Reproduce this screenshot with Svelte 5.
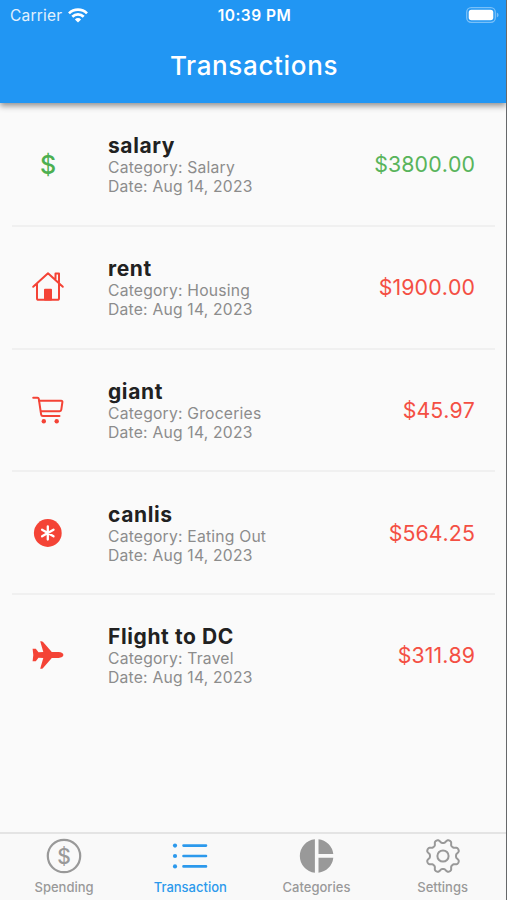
<script>
  const date = 'Aug 14, 2023';

  const transactions = [
    { id: 1, name: 'salary', category: 'Salary', amount: 3800, icon: 'dollar', income: true },
    { id: 2, name: 'rent', category: 'Housing', amount: 1900, icon: 'home' },
    { id: 3, name: 'giant', category: 'Groceries', amount: 45.97, icon: 'cart' },
    { id: 4, name: 'canlis', category: 'Eating Out', amount: 564.25, icon: 'asterisk' },
    { id: 5, name: 'Flight to DC', category: 'Travel', amount: 311.89, icon: 'plane' },
  ];

  const tabs = ['Spending', 'Transaction', 'Categories', 'Settings'];
  let active = $state('Transaction');

  // outline of the eight-toothed settings gear
  const gear = Array.from({ length: 160 }, (_, i) => {
    const a = (i / 160) * Math.PI * 2;
    const r = 14.9 - 2 * Math.tanh(1.6 * Math.cos(8 * a) + 0.1);
    return `${(18 + r * Math.sin(a)).toFixed(2)},${(18 - r * Math.cos(a)).toFixed(2)}`;
  }).join(' ');
</script>

<div class="phone">
  <header>
    <div class="status">
      <div class="carrier">
        <span>Carrier</span>
        <svg width="20" height="15" viewBox="0 0 20 15" fill="none" stroke="#fff" stroke-width="2.7">
          <path d="M1 5.4a12.8 12.8 0 0 1 18 0" />
          <path d="M4.3 8.8a8.1 8.1 0 0 1 11.4 0" />
          <path d="M10 14.6l-3.1-3.2a4.4 4.4 0 0 1 6.2 0z" fill="#fff" stroke="none" />
        </svg>
      </div>
      <div class="time">10:39 PM</div>
      <div class="battery">
        <svg width="33" height="16" viewBox="0 0 33 16">
          <rect x=".7" y=".7" width="28.6" height="14.6" rx="4.5" fill="none" stroke="#fff" stroke-opacity=".4" stroke-width="1.3" />
          <rect x="2.7" y="2.8" width="24.6" height="10.4" rx="2.7" fill="#fff" />
          <path d="M30.8 5.4q1.8.8 1.8 2.6t-1.8 2.6z" fill="#fff" fill-opacity=".4" />
        </svg>
      </div>
    </div>
    <h1>Transactions</h1>
  </header>

  <main>
    {#each transactions as item (item.id)}
      <div class="row" class:income={item.income}>
        <div class="icon">
          {#if item.icon === 'dollar'}
            <span class="dollar">$</span>
          {:else if item.icon === 'home'}
            <svg width="34" height="34" viewBox="0 0 34 34" fill="none" stroke="currentColor" stroke-width="2" stroke-linecap="round" stroke-linejoin="round">
              <path d="M2.2 16.8L17 3.2l14.8 13.6M6 14v14.2q0 1.6 1.6 1.6h18.8q1.6 0 1.6-1.6V14M24.5 9V3.6H28v9" />
              <path d="M14 29.5V19.8h6v9.7z" fill="currentColor" />
            </svg>
          {:else if item.icon === 'cart'}
            <svg width="34" height="34" viewBox="0 0 34 34" fill="none" stroke="currentColor" stroke-width="2" stroke-linecap="round" stroke-linejoin="round">
              <path d="M2.2 4.8h4.3q1.1 0 1.3 1.1l2.3 15.4q.2 1.7 1.8 1.7h16.6" />
              <path d="M8.2 7.7h22q1.4 0 1.2 1.4l-1.1 7.6q-.2 1.4-1.7 1.5L10 18.3" />
              <g fill="currentColor" stroke="none">
                <circle cx="12.8" cy="28.2" r="2.2" />
                <circle cx="25.7" cy="28.2" r="2.2" />
              </g>
            </svg>
          {:else if item.icon === 'asterisk'}
            <svg width="34" height="34" viewBox="0 0 34 34">
              <circle cx="16.8" cy="17" r="13.9" fill="currentColor" />
              <path d="M16.8 10.4v13.2M11.1 13.7l11.4 6.6M22.5 13.7l-11.4 6.6" stroke="#fff" stroke-width="2.3" stroke-linecap="round" />
            </svg>
          {:else}
            <svg width="34" height="34" viewBox="0 0 34 34" fill="currentColor">
              <path d="M9.2 3.3q1.9-.5 2.9.8l8.7 9.8 6.8.2q4.6.4 4.8 2.9-.2 2.5-4.8 2.9l-6.8.2-8.7 9.8q-1 1.3-2.9.8l3.1-10.6-4.8-.3-2.7 3.5H1.6l.7-6.3-.7-6.3h3.2l2.7 3.5 4.8-.3z" />
            </svg>
          {/if}
        </div>
        <div class="details">
          <h2>{item.name}</h2>
          <p>Category: {item.category}</p>
          <p>Date: {date}</p>
        </div>
        <div class="amount">${item.amount.toFixed(2)}</div>
      </div>
    {/each}
  </main>

  <nav>
    {#each tabs as tab}
      <button class:active={active === tab} onclick={() => (active = tab)}>
        <svg width="36" height="36" viewBox="0 0 36 36" fill="none" stroke="currentColor" stroke-width="2.2">
          {#if tab === 'Spending'}
            <circle cx="18" cy="18" r="16.2" />
            <text x="18" y="25.5" text-anchor="middle" fill="currentColor" stroke="none" font-size="21">$</text>
          {:else if tab === 'Transaction'}
            <path d="M11.5 7.6H34M11.5 18H34M11.5 28.4H34" stroke-width="2.6" stroke-linecap="round" />
            <g fill="currentColor" stroke="none">
              <circle cx="3" cy="7.6" r="2.1" />
              <circle cx="3" cy="18" r="2.1" />
              <circle cx="3" cy="28.4" r="2.1" />
            </g>
          {:else if tab === 'Categories'}
            <path d="M16.9 1.2a16.9 16.9 0 0 0 0 33.6zM20.5 1.2a16.9 16.9 0 0 1 14.8 14.9H20.5zM20.5 19.7h14.8a16.9 16.9 0 0 1-14.8 15.1z" fill="currentColor" stroke="none" />
          {:else}
            <polygon points={gear} stroke-width="2" stroke-linejoin="round" />
            <circle cx="18" cy="18" r="5.6" stroke-width="2" />
          {/if}
        </svg>
        <span>{tab}</span>
      </button>
    {/each}
  </nav>
</div>

<style>
  :global(body) {
    margin: 0;
    background: #fafafa;
  }

  .phone {
    box-sizing: border-box;
    height: 900px;
    display: flex;
    flex-direction: column;
    border-right: 1px solid #66686a;
    background: #fafafa;
    font-family: Inter, sans-serif;
    overflow: hidden;
  }

  header {
    height: 103px;
    background: #2196f3;
    color: #fff;
    box-shadow: 0 3px 6px rgba(0, 0, 0, 0.42);
  }

  .status {
    display: grid;
    grid-template-columns: 1fr auto 1fr;
    align-items: center;
    height: 30px;
    padding: 0 7px 0 10px;
    font-size: 15.5px;
  }

  .carrier {
    display: flex;
    align-items: center;
    gap: 6px;
    letter-spacing: 0.2px;
    color: #e2f1fd;
  }

  .time {
    font-weight: 600;
    letter-spacing: 0.5px;
  }

  .battery {
    display: flex;
    justify-content: flex-end;
  }

  h1 {
    margin: 0;
    padding-left: 2px;
    text-align: center;
    font-size: 26px;
    font-weight: 450;
    line-height: 72px;
    letter-spacing: 0.65px;
  }

  main {
    flex: 1;
    padding: 1px 11px 0 12px;
  }

  .row {
    box-sizing: border-box;
    height: 122.75px;
    display: flex;
    align-items: center;
    border-bottom: 2px solid #f0f0f0;
    padding-right: 20px;
    color: #f44336;
  }

  .row:last-child {
    border-color: transparent;
  }

  .row.income {
    color: #4caf50;
  }

  .icon {
    display: flex;
    justify-content: center;
    width: 72px;
    margin-right: 24px;
  }

  .dollar {
    padding-top: 1px;
    font-size: 25px;
    font-weight: 500;
  }

  .details {
    flex: 1;
    padding-top: 1px;
  }

  h2 {
    margin: 0;
    color: #212121;
    font-size: 21px;
    font-weight: 700;
    line-height: 25px;
    letter-spacing: 0.6px;
  }

  p {
    margin: 0;
    color: #8c8c8c;
    font-size: 15.7px;
    line-height: 19px;
    letter-spacing: 0.2px;
  }

  .amount {
    font-size: 21.3px;
    font-kerning: none;
    letter-spacing: 0.1px;
    opacity: 0.93;
  }

  nav {
    box-sizing: border-box;
    height: 68px;
    display: grid;
    grid-template-columns: repeat(4, 126.2px);
    padding-left: 1px;
    border-top: 2px solid #e4e4e4;
    background: #f9f9f9;
  }

  button {
    display: flex;
    flex-direction: column;
    align-items: center;
    gap: 5px;
    padding: 4px 0 0;
    border: 0;
    background: none;
    color: #999;
    font-family: inherit;
    font-size: 13px;
    font-weight: 450;
    line-height: 16px;
    letter-spacing: 0;
  }

  button.active {
    color: #2c99ec;
    font-weight: 500;
  }
</style>
